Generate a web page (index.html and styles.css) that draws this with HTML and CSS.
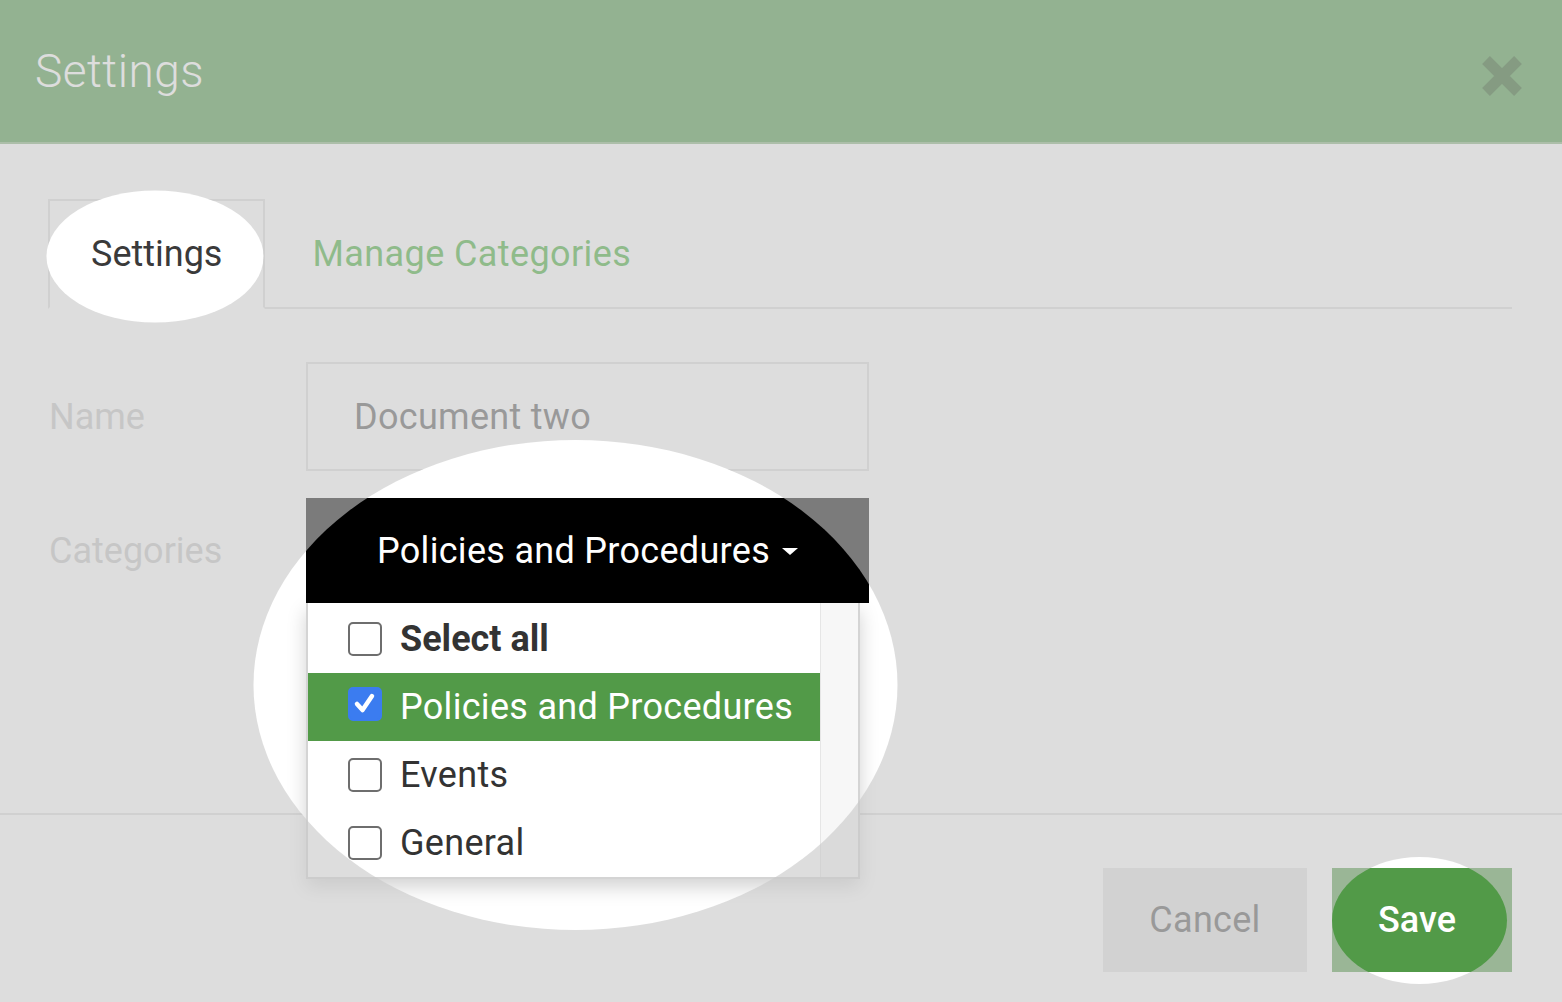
FILE: index.html
```html
<!DOCTYPE html>
<html lang="en">
<head>
    <meta charset="UTF-8">
    <meta name="viewport" content="width=device-width, initial-scale=1.0">
    <title>Settings</title>
    <link rel="stylesheet" href="styles.css">
</head>
<body>
    <div class="modal">
        <div class="modal-header">
            <h1 class="modal-title">Settings</h1>
            <button class="close" type="button" aria-label="Close">
                <svg width="44" height="44" viewBox="0 0 44 44">
                    <path d="M 6 6 L 38 38 M 38 6 L 6 38" />
                </svg>
            </button>
        </div>

        <div class="modal-body">
            <ul class="tabs">
                <li class="tab active"><a><span class="spot-target">Settings</span></a></li>
                <li class="tab"><a>Manage Categories</a></li>
            </ul>

            <div class="form">
                <div class="form-row">
                    <label class="form-label">Name</label>
                    <div class="form-input">Document two</div>
                </div>
                <div class="form-row">
                    <label class="form-label">Categories</label>
                    <div class="dropdown spot-target">
                        <button class="dropdown-toggle" type="button">
                            Policies and Procedures <span class="caret"></span>
                        </button>
                        <div class="dropdown-menu">
                            <ul class="menu-list">
                                <li class="menu-item select-all">
                                    <span class="checkbox"></span>
                                    Select all
                                </li>
                                <li class="menu-item selected">
                                    <span class="checkbox checked">
                                        <svg width="26" height="26" viewBox="0 0 26 26">
                                            <path d="M 5 13 L 10.5 19 L 20 5" />
                                        </svg>
                                    </span>
                                    Policies and Procedures
                                </li>
                                <li class="menu-item">
                                    <span class="checkbox"></span>
                                    Events
                                </li>
                                <li class="menu-item">
                                    <span class="checkbox"></span>
                                    General
                                </li>
                            </ul>
                            <div class="menu-scroll"></div>
                        </div>
                    </div>
                </div>
            </div>
        </div>

        <div class="modal-footer">
            <button class="btn btn-cancel" type="button">Cancel</button>
            <button class="btn btn-save spot-target" type="button">Save</button>
        </div>

        <!-- spotlight: white discs under the highlighted parts -->
        <svg class="spot-fill" viewBox="0 0 1562 1002" preserveAspectRatio="none">
            <ellipse cx="155" cy="256.5" rx="108.5" ry="66" />
            <ellipse cx="575.5" cy="685" rx="322" ry="245" />
            <ellipse cx="1419.5" cy="920.5" rx="87.5" ry="63.5" />
        </svg>

        <!-- spotlight: dim layer with holes -->
        <svg class="spot-dim" viewBox="0 0 1562 1002" preserveAspectRatio="none">
            <defs>
                <mask id="holes">
                    <rect width="1562" height="1002" fill="white" />
                    <ellipse cx="155" cy="256.5" rx="108.5" ry="66" fill="black" />
                    <ellipse cx="575.5" cy="685" rx="322" ry="245" fill="black" />
                    <ellipse cx="1419.5" cy="920.5" rx="87.5" ry="63.5" fill="black" />
                </mask>
            </defs>
            <rect width="1562" height="1002" mask="url(#holes)" />
        </svg>
    </div>
</body>
</html>
```

FILE: styles.css
```css
* {
    margin: 0;
    padding: 0;
    box-sizing: border-box;
}

body {
    font-family: Roboto, 'Liberation Sans', sans-serif;
    background: #fff;
    color: #333;
}

.modal {
    position: relative;
    width: 1562px;
    height: 1002px;
    background: #fff;
    overflow: hidden;
}

/* header */

.modal-header {
    height: 144px;
    display: flex;
    align-items: center;
    justify-content: space-between;
    padding: 0 38px 0 35px;
    background: #3f8f3a;
    border-bottom: 2px solid #7fae79;
}

.modal-title {
    font-size: 46px;
    font-weight: 300;
    color: #fff;
    letter-spacing: 0.5px;
}

.close {
    background: none;
    border: none;
    width: 44px;
    height: 44px;
    margin-top: 10px;
}

.close svg path {
    stroke: #1a5514;
    stroke-width: 11;
    fill: none;
}

/* body */

.modal-body {
    height: 669px;
    padding: 55px 50px 0 48px;
}

.tabs {
    list-style: none;
    display: flex;
    border-bottom: 2px solid #ddd;
}

.tab a {
    display: block;
    font-size: 36px;
    line-height: 42px;
    padding: 32px 41px 32px;
    border: 2px solid transparent;
    margin-bottom: -2px;
    color: #34a628;
    letter-spacing: 0.4px;
}

.tab + .tab a {
    margin-left: 4px;
}

.tab.active a {
    color: #3a3a3a;
    letter-spacing: 0;
    border-color: #ddd #ddd #fff;
}

.form {
    padding-top: 53px;
    display: flex;
    flex-direction: column;
    gap: 27px;
}

.form-row {
    display: flex;
    align-items: center;
}

.form-label {
    width: 258px;
    padding-left: 1px;
    font-size: 36px;
    color: #c4c4c4;
}

.form-input {
    width: 563px;
    height: 109px;
    border: 2px solid #dcdcdc;
    padding: 0 46px;
    display: flex;
    align-items: center;
    font-size: 36px;
    color: #505050;
    letter-spacing: 0.3px;
}

/* dropdown */

.dropdown {
    position: relative;
    width: 563px;
}

.dropdown-toggle {
    width: 100%;
    height: 105px;
    background: #000;
    color: #fff;
    border: none;
    font-family: inherit;
    font-size: 36px;
    letter-spacing: 0.3px;
    display: flex;
    align-items: center;
    justify-content: center;
    gap: 12px;
}

.caret {
    width: 0;
    height: 0;
    border-top: 7px solid #fff;
    border-left: 8px solid transparent;
    border-right: 8px solid transparent;
    margin-top: 2px;
}

.dropdown-menu {
    position: absolute;
    top: 100%;
    left: 0;
    width: 554px;
    display: flex;
    background: #fff;
    border: 2px solid #d4d4d4;
    border-top: none;
    box-shadow: 0 8px 18px rgba(0, 0, 0, 0.18);
}

.menu-list {
    list-style: none;
    flex: 1;
    padding-top: 2px;
}

.menu-item {
    height: 68px;
    display: flex;
    align-items: center;
    gap: 18px;
    padding-left: 40px;
    font-size: 36px;
    color: #333;
    letter-spacing: 0.3px;
}

.menu-item.select-all {
    font-weight: 700;
    letter-spacing: 0;
}

.menu-item.selected {
    background: #529a48;
    color: #fff;
}

.checkbox {
    width: 34px;
    height: 34px;
    border: 2px solid #6e6e6e;
    border-radius: 5px;
    background: #fff;
    display: flex;
    align-items: center;
    justify-content: center;
    flex-shrink: 0;
}

.checkbox.checked {
    background: #3b7cf0;
    border-color: #3b7cf0;
    margin-top: -6px;
}

.checkbox svg path {
    stroke: #fff;
    stroke-width: 4.5;
    fill: none;
    stroke-linecap: round;
    stroke-linejoin: round;
}

.menu-scroll {
    width: 38px;
    background: #f7f7f7;
    border-left: 1px solid #e6e6e6;
}

/* footer */

.modal-footer {
    border-top: 2px solid #ddd;
    padding: 53px 50px 30px;
    display: flex;
    justify-content: flex-end;
    gap: 25px;
}

.btn {
    height: 104px;
    border: none;
    font-family: inherit;
    font-size: 36px;
}

.btn-cancel {
    width: 204px;
    background: #e2e2e2;
    color: #505050;
    letter-spacing: 0.3px;
}

.btn-save {
    width: 180px;
    padding-right: 10px;
    background: #529a48;
    color: #fff;
    font-weight: 500;
}

/* spotlight overlay */

.spot-target {
    position: relative;
    z-index: 2;
}

.spot-fill,
.spot-dim {
    position: absolute;
    top: 0;
    left: 0;
    width: 100%;
    height: 100%;
    pointer-events: none;
}

.spot-fill {
    z-index: 1;
    fill: #fff;
}

.spot-dim {
    z-index: 3;
    fill: rgba(200, 200, 200, 0.616);
}
```
